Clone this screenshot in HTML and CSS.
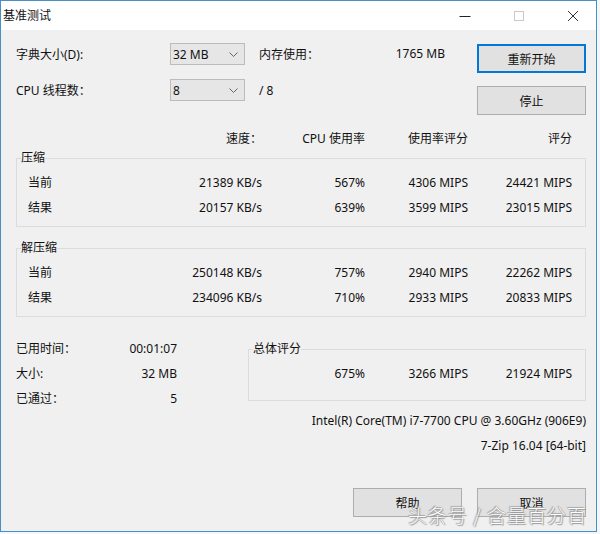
FILE: index.html
```html
<!DOCTYPE html>
<html lang="zh-CN">
<head>
<meta charset="utf-8">
<title>基准测试</title>
<link rel="stylesheet" href="styles.css">
</head>
<body>
<div class="window">
  <div class="titlebar">
    <span class="title">基准测试</span>
    <div class="controls">
      <span class="ctl"><svg width="12" height="12" viewBox="0 0 12 12"><path d="M0.5 6.5H11.5" stroke="#222" stroke-width="1"/></svg></span>
      <span class="ctl"><svg width="12" height="12" viewBox="0 0 12 12"><rect x="1.5" y="1.5" width="9" height="9" fill="none" stroke="#c9c9c9" stroke-width="1"/></svg></span>
      <span class="ctl"><svg width="12" height="12" viewBox="0 0 12 12"><path d="M1 1L11 11M11 1L1 11" stroke="#333" stroke-width="1"/></svg></span>
    </div>
  </div>
  <div class="content">
    <div class="top">
      <div class="settings">
        <div class="srow">
          <span class="slabel">字典大小(D):</span>
          <span class="combo"><span>32 MB</span><svg width="9" height="5" viewBox="0 0 9 5"><path d="M0.5 0.5L4.5 4.5L8.5 0.5" fill="none" stroke="#666" stroke-width="1"/></svg></span>
          <span class="mem"><span>内存使用：</span><span>1765 MB</span></span>
        </div>
        <div class="srow">
          <span class="slabel">CPU 线程数：</span>
          <span class="combo"><span>8</span><svg width="9" height="5" viewBox="0 0 9 5"><path d="M0.5 0.5L4.5 4.5L8.5 0.5" fill="none" stroke="#666" stroke-width="1"/></svg></span>
          <span class="mem"><span>/ 8</span></span>
        </div>
      </div>
      <div class="actions">
        <button class="btn default">重新开始</button>
        <button class="btn">停止</button>
      </div>
    </div>

    <div class="cols header">
      <span></span><span>速度：</span><span>CPU 使用率</span><span>使用率评分</span><span>评分</span>
    </div>

    <fieldset class="group g1">
      <legend>压缩</legend>
      <div class="cols row"><span class="lbl">当前</span><span>21389 KB/s</span><span>567%</span><span>4306 MIPS</span><span>24421 MIPS</span></div>
      <div class="cols row"><span class="lbl">结果</span><span>20157 KB/s</span><span>639%</span><span>3599 MIPS</span><span>23015 MIPS</span></div>
    </fieldset>

    <fieldset class="group g2">
      <legend>解压缩</legend>
      <div class="cols row"><span class="lbl">当前</span><span>250148 KB/s</span><span>757%</span><span>2940 MIPS</span><span>22262 MIPS</span></div>
      <div class="cols row"><span class="lbl">结果</span><span>234096 KB/s</span><span>710%</span><span>2933 MIPS</span><span>20833 MIPS</span></div>
    </fieldset>

    <div class="bottom">
      <div class="stats">
        <div class="stat"><span>已用时间：</span><span>00:01:07</span></div>
        <div class="stat"><span>大小:</span><span>32 MB</span></div>
        <div class="stat"><span>已通过：</span><span>5</span></div>
      </div>
      <fieldset class="group total">
        <legend>总体评分</legend>
        <div class="tcols row"><span>675%</span><span>3266 MIPS</span><span>21924 MIPS</span></div>
      </fieldset>
    </div>

    <div class="info cpu">Intel(R) Core(TM) i7-7700 CPU @ 3.60GHz (906E9)</div>
    <div class="info ver">7-Zip 16.04 [64-bit]</div>

    <div class="footer">
      <button class="btn">帮助</button>
      <button class="btn">取消</button>
    </div>
  </div>
  <div class="watermark">头条号 / 含量百分百</div>
</div>
</body>
</html>
```

FILE: styles.css
```css
html, body {
  margin: 0;
  padding: 0;
  background: #f4f7fa;
}
body {
  width: 600px;
  height: 534px;
  overflow: hidden;
  font-family: "Noto Sans", "Noto Sans CJK SC", sans-serif;
  font-size: 12px;
  color: #111;
}
.window {
  position: relative;
  width: 597px;
  height: 532px;
  box-sizing: border-box;
  border: 1px solid #4a8fc2;
  background: #f0f0f0;
  display: flex;
  flex-direction: column;
}
.titlebar {
  height: 29px;
  background: #fff;
  display: flex;
  align-items: center;
  justify-content: space-between;
  flex: none;
}
.title {
  padding-left: 2px;
  font-size: 12px;
  color: #111;
  line-height: 16px;
}
.controls {
  display: flex;
  align-items: center;
  gap: 42px;
  padding-right: 17px;
}
.ctl {
  display: flex;
  width: 12px;
  height: 12px;
}
.content {
  padding: 13px 10px 0 15px;
  flex: 1;
}
.top {
  display: flex;
  align-items: flex-start;
}
.settings {
  display: flex;
  flex-direction: column;
  gap: 14px;
}
.srow {
  display: flex;
  align-items: center;
  height: 22px;
}
.slabel {
  width: 154px;
}
.combo {
  width: 75px;
  height: 22px;
  box-sizing: border-box;
  border: 1px solid #bcbcbc;
  background: #e6e6e6;
  display: flex;
  align-items: center;
  justify-content: space-between;
  padding: 0 6px 0 2px;
}
.combo svg {
  margin-top: 1px;
}
.mem {
  margin-left: 14px;
  width: 186px;
  display: flex;
  justify-content: space-between;
}
.actions {
  margin-left: auto;
  margin-top: 1px;
  display: flex;
  flex-direction: column;
  gap: 13px;
}
.btn {
  width: 109px;
  height: 29px;
  box-sizing: border-box;
  border: 1px solid #adadad;
  background: #e1e1e1;
  font-family: "Noto Sans", "Noto Sans CJK SC", sans-serif;
  font-size: 12px;
  color: #111;
  padding: 0;
  margin: 0;
}
.btn.default {
  border-color: #0078d7;
  box-shadow: inset 0 0 0 1px #0078d7;
}
.cols {
  display: grid;
  grid-template-columns: 112px 133px 103px 103px 104px;
  text-align: right;
}
.cols .lbl {
  text-align: left;
  padding-left: 11px;
}
.header {
  margin-top: 16px;
  padding-left: 1px;
  line-height: 16px;
  height: 16px;
}
.group {
  margin: 0;
  padding: 4px 0 6px 0;
  border: 1px solid #dcdcdc;
  min-width: 0;
}
.group legend {
  padding: 0;
  margin-left: 4px;
  line-height: 16px;
  font-size: 12px;
}
.g1 { margin-top: 3px; }
.g2 { margin-top: 13px; }
.row {
  height: 25px;
  line-height: 25px;
}
.bottom {
  margin-top: 19px;
  display: flex;
  align-items: flex-start;
}
.stats {
  width: 161px;
}
.stat {
  display: flex;
  justify-content: space-between;
  height: 25px;
  line-height: 25px;
}
.total {
  margin-left: auto;
  margin-top: 5px;
  width: 338px;
  box-sizing: border-box;
  padding-bottom: 14px;
}
.tcols {
  display: grid;
  grid-template-columns: 116px 103px 104px;
  text-align: right;
}
.info {
  text-align: right;
  line-height: 16px;
  height: 16px;
}
.cpu { margin-top: 2px; }
.ver { margin-top: 9px; }
.footer {
  margin-top: 34px;
  display: flex;
  justify-content: flex-end;
  gap: 15px;
}
.watermark {
  position: absolute;
  left: 407px;
  top: 502px;
  font-size: 19px;
  line-height: 24px;
  color: #fff;
  letter-spacing: 1px;
  text-shadow: 0 0 1px #777, 1px 1px 1px #999, -1px -1px 1px #aaa;
  font-family: "Noto Sans CJK SC", sans-serif;
  font-weight: 300;
  white-space: nowrap;
}
```
